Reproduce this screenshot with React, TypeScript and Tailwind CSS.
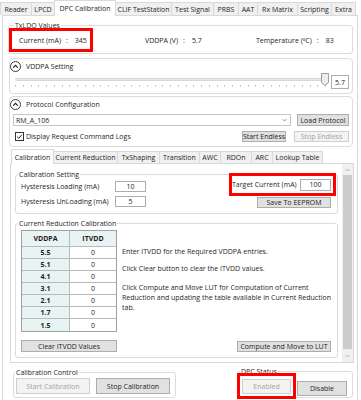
import type { ReactNode } from "react";

const topTabs: [string, string][] = [
  ["Reader", "w-[32px] border-l"],
  ["LPCD", "w-[23px]"],
  ["DPC Calibration", "sel"],
  ["CLIF TestStation", "w-[56px]"],
  ["Test Signal", "w-[42px]"],
  ["PRBS", "w-[25px]"],
  ["AAT", "w-[19px]"],
  ["Rx Matrix", "w-[40px]"],
  ["Scripting", "w-[34px]"],
  ["Extra", "w-[24px]"],
];

const innerTabs: [string, string][] = [
  ["Calibration", "sel"],
  ["Current Reduction", "w-[64px]"],
  ["TxShaping", "w-[42px]"],
  ["Transition", "w-[40px]"],
  ["AWC", "w-[21px]"],
  ["RDOn", "w-[31px]"],
  ["ARC", "w-[21px]"],
  ["Lookup Table", "w-[50px]"],
];

const rows = ["5.5", "5.1", "4.1", "3.1", "2.1", "1.7", "1.5"];

function Btn({ children, className = "", disabled = false }: { children: ReactNode; className?: string; disabled?: boolean }) {
  return (
    <div
      className={`flex shrink-0 items-center justify-center whitespace-nowrap border ${
        disabled ? "border-[#cfcfcf] bg-[#f3f3f3] text-[#a3a3a3]" : "border-[#adadad] bg-[#e1e1e1] text-[#1e1e1e]"
      } ${className}`}
    >
      {children}
    </div>
  );
}

function Box({ children, className = "" }: { children: ReactNode; className?: string }) {
  return (
    <div className={`flex shrink-0 items-center justify-center border border-[#abadb3] bg-white ${className}`}>
      {children}
    </div>
  );
}

function Group({
  title,
  className,
  legendClass = "ml-[2px]",
  children,
}: {
  title: string;
  className: string;
  legendClass?: string;
  children: ReactNode;
}) {
  return (
    <fieldset className={`shrink-0 rounded-[3px] border border-[#dcdcdc] ${className}`}>
      <legend className={`whitespace-nowrap px-[1px] leading-[9px] ${legendClass}`}>{title}</legend>
      {children}
    </fieldset>
  );
}

function Collapse() {
  return (
    <svg width="11" height="11" viewBox="0 0 11 11" className="shrink-0">
      <circle cx="5.5" cy="5.5" r="5" fill="white" stroke="#3a3a3a" strokeWidth="1" />
      <path d="M3.2 6.7 L5.5 4.4 L7.8 6.7" fill="none" stroke="#1e1e1e" strokeWidth="1.1" />
    </svg>
  );
}

function Slider() {
  const ticks = Array.from({ length: 41 }, (_, i) => Math.round(3 + i * 7.75));
  return (
    <svg width="318" height="17" viewBox="0 0 318 17" className="shrink-0">
      <rect x="3.5" y="6.5" width="310" height="2" rx="1" fill="#e7e7e7" stroke="#d6d6d6" />
      {ticks.map((x, i) => (
        <rect key={i} x={x} y="13" width="1" height="1.5" fill="#b4b4b4" />
      ))}
      <path d="M309.5 1.5 H316.5 V10.5 L313 13.5 L309.5 10.5 Z" fill="#ececec" stroke="#9d9d9d" />
    </svg>
  );
}

function Kv({ k, v }: { k: string; v: string }) {
  return (
    <div className="flex shrink-0 items-center whitespace-nowrap">
      <span>{k}</span>
      <span className="ml-[5px]">:</span>
      <span className="ml-[7px]">{v}</span>
    </div>
  );
}

export default function App() {
  return (
    <div className="h-[400px] w-[361px] overflow-hidden bg-white font-['Open_Sans',sans-serif] text-[7px] leading-[9px] text-[#1e1e1e]">
      {/* main tab strip */}
      <div className="flex h-[15px] items-end">
        {topTabs.map(([t, c]) =>
          c === "sel" ? (
            <div
              key={t}
              className="relative z-10 -mb-px -ml-px flex h-[16px] w-[62px] shrink-0 items-center justify-center whitespace-nowrap border-x border-t border-[#d9d9d9] bg-white"
            >
              {t}
            </div>
          ) : (
            <div
              key={t}
              className={`flex h-[13px] shrink-0 items-center justify-center whitespace-nowrap border-r border-t border-[#d9d9d9] bg-[#f0f0f0] ${c}`}
            >
              {t}
            </div>
          )
        )}
      </div>

      <div className="ml-[2px] flex h-[386px] w-[356px] flex-col border border-[#d9d9d9] bg-white">
        <Group title="TxLDO Values" className="ml-[5px] mt-[5px] h-[33px] w-[345px]" legendClass="ml-[5px]">
          <div className="-mt-[2px] flex items-center">
            <div className="flex h-[24px] w-[84px] shrink-0 items-center border-[3px] border-[#ff0000] pl-[7px]">
              <Kv k="Current (mA)" v="345" />
            </div>
            <div className="ml-[52px] flex w-[111px] shrink-0">
              <Kv k="VDDPA (V)" v="5.7" />
            </div>
            <Kv k="Temperature (ºC)" v="83" />
          </div>
        </Group>

        {/* VDDPA setting */}
        <div className="ml-[6px] mt-[4px] h-[36px] w-[344px] shrink-0 rounded-[4px] border border-[#dcdcdc]">
          <div className="mt-[2px] flex h-[11px] items-center">
            <Collapse />
            <span className="ml-[5px]">VDDPA Setting</span>
          </div>
          <div className="flex items-start">
            <div className="ml-[2px]">
              <Slider />
            </div>
            <Box className="ml-[1px] mt-[3px] h-[14px] w-[18px]">5.7</Box>
          </div>
        </div>

        {/* protocol configuration */}
        <div className="ml-[6px] mt-[2px] h-[51px] w-[344px] shrink-0 rounded-[4px] border border-[#dcdcdc]">
          <div className="mt-[2px] flex h-[11px] items-center">
            <Collapse />
            <span className="ml-[5px]">Protocol Configuration</span>
          </div>
          <div className="mt-[4px] flex">
            <div className="ml-[3px] flex h-[12px] w-[278px] items-center justify-between border border-[#c5c5c5] bg-white pl-[2px] pr-[3px]">
              <span>RM_A_106</span>
              <svg width="5" height="4" viewBox="0 0 5 4">
                <path d="M0.5 1 L2.5 3 L4.5 1" fill="none" stroke="#808080" strokeWidth="0.8" />
              </svg>
            </div>
            <Btn className="ml-[6px] h-[12px] w-[52px]">Load Protocol</Btn>
          </div>
          <div className="mt-[5px] flex h-[11px] items-center">
            <div className="ml-[5px] flex h-[9px] w-[9px] shrink-0 items-center justify-center border border-[#333] bg-white">
              <svg width="7" height="7" viewBox="0 0 7 7">
                <path d="M1 3.6 L2.8 5.3 L6 1.6" fill="none" stroke="#222" strokeWidth="1" />
              </svg>
            </div>
            <span className="ml-[2px] whitespace-nowrap">Display Request Command Logs</span>
            <Btn className="ml-auto h-[11px] w-[44px]">Start Endless</Btn>
            <Btn disabled className="ml-[8px] mr-[3px] h-[11px] w-[55px]">
              Stop Endless
            </Btn>
          </div>
        </div>

        {/* inner tab strip */}
        <div className="ml-[8px] mt-[2px] flex h-[14px] items-end">
          {innerTabs.map(([t, c]) =>
            c === "sel" ? (
              <div
                key={t}
                className="relative z-10 -mb-px flex h-[15px] w-[43px] shrink-0 items-center justify-center whitespace-nowrap border-x border-t border-[#d9d9d9] bg-white"
              >
                {t}
              </div>
            ) : (
              <div
                key={t}
                className={`flex h-[12px] shrink-0 items-center justify-center whitespace-nowrap border-r border-t border-[#d9d9d9] bg-[#f0f0f0] ${c}`}
              >
                {t}
              </div>
            )
          )}
        </div>

        <div className="ml-[7px] flex h-[200px] w-[344px] shrink-0 border border-[#d9d9d9] bg-white">
          <div className="flex w-[331px] flex-col">
            <Group title="Calibration Setting" className="ml-[4px] mt-[6px] h-[44px] w-[323px]">
              <div className="flex">
                <div className="ml-[5px] flex flex-col">
                  <div className="mt-[2px] flex items-center">
                    <span className="w-[94px] whitespace-nowrap">Hysteresis Loading (mA)</span>
                    <Box className="h-[11px] w-[31px]">10</Box>
                  </div>
                  <div className="mt-[4px] flex items-center">
                    <span className="w-[94px] whitespace-nowrap">Hysteresis UnLoading (mA)</span>
                    <Box className="h-[11px] w-[31px]">5</Box>
                  </div>
                </div>
                <div className="-mt-[6px] ml-auto mr-[1px] flex flex-col items-end">
                  <div className="flex h-[23px] w-[107px] items-center border-[3px] border-[#ff0000]">
                    <span className="whitespace-nowrap">Target Current (mA)</span>
                    <Box className="ml-auto mr-[2px] h-[12px] w-[31px]">100</Box>
                  </div>
                  <Btn className="mr-[5px] mt-[1px] h-[11px] w-[74px]">Save To EEPROM</Btn>
                </div>
              </div>
            </Group>

            <Group title="Current Reduction Calibration" className="ml-[4px] mt-[5px] h-[139px] w-[323px]">
              <div className="flex h-[129px]">
                <div className="ml-[5px] flex flex-col">
                  <div className="mt-[2px] w-[96px] border border-[#a0a0a0]">
                    <div className="flex h-[16px] border-b border-[#b9b9b9] bg-[#e8f3f3] font-bold">
                      <div className="flex w-[48px] items-center justify-center border-r border-[#b9b9b9]">VDDPA</div>
                      <div className="flex flex-1 items-center justify-center">ITVDD</div>
                    </div>
                    {rows.map((r, i) => (
                      <div
                        key={r}
                        className={`flex h-[12px] ${i < rows.length - 1 ? "border-b border-[#b9b9b9]" : ""}`}
                      >
                        <div className="flex w-[48px] items-center justify-center border-r border-[#b9b9b9] bg-[#e8f3f3] font-bold">
                          {r}
                        </div>
                        <div className="flex flex-1 items-center justify-center bg-white">0</div>
                      </div>
                    ))}
                  </div>
                  <Btn className="mb-[5px] mt-auto h-[12px] w-[96px]">Clear ITVDD Values</Btn>
                </div>
                <div className="ml-[5px] flex flex-1 flex-col leading-[10px]">
                  <p className="mt-[19px] whitespace-nowrap">Enter ITVDD for the Required VDDPA entries.</p>
                  <p className="mt-[7px] whitespace-nowrap">Click Clear button to clear the ITVDD values.</p>
                  <p className="mt-[9px] whitespace-nowrap">
                    Click Compute and Move LUT for Computation of Current
                    <br />
                    Reduction and updating the table available in Current Reduction
                    <br />
                    tab.
                  </p>
                  <Btn className="mb-[5px] mr-[6px] mt-auto h-[11px] w-[94px] self-end leading-[9px]">
                    Compute and Move to LUT
                  </Btn>
                </div>
              </div>
            </Group>
          </div>

          {/* scrollbar */}
          <div className="flex w-[11px] flex-col bg-[#f0f0f0]">
            <div className="flex h-[11px] items-center justify-center">
              <svg width="5" height="4" viewBox="0 0 5 4">
                <path d="M0.5 3 L2.5 1 L4.5 3" fill="none" stroke="#a0a0a0" strokeWidth="0.8" />
              </svg>
            </div>
            <div className="mx-[1px] flex-1 bg-[#cdcdcd]" />
            <div className="flex h-[13px] items-center justify-center">
              <svg width="5" height="4" viewBox="0 0 5 4">
                <path d="M0.5 1 L2.5 3 L4.5 1" fill="none" stroke="#a0a0a0" strokeWidth="0.8" />
              </svg>
            </div>
          </div>
        </div>

        {/* bottom groups */}
        <div className="flex items-start">
          <Group title="Calibration Control" className="ml-[10px] mt-[5px] h-[30px] w-[163px]" legendClass="ml-[1px]">
            <div className="mt-[1px] flex">
              <Btn disabled className="ml-[2px] h-[16px] w-[74px]">
                Start Calibration
              </Btn>
              <Btn className="ml-[6px] h-[16px] w-[74px]">Stop Calibration</Btn>
            </div>
          </Group>
          <Group title="DPC Status" className="ml-[61px] mt-[4px] h-[31px] w-[116px]">
            <div className="flex items-start">
              <div className="relative -ml-[1px] -mt-[3px] flex h-[26px] w-[59px] shrink-0 items-center justify-center border-[3px] border-[#ff0000]">
                <Btn disabled className="h-[15px] w-[49px]">
                  Enabled
                </Btn>
              </div>
              <Btn className="ml-[1px] mt-[5px] h-[15px] w-[50px]">Disable</Btn>
            </div>
          </Group>
        </div>
      </div>
    </div>
  );
}
